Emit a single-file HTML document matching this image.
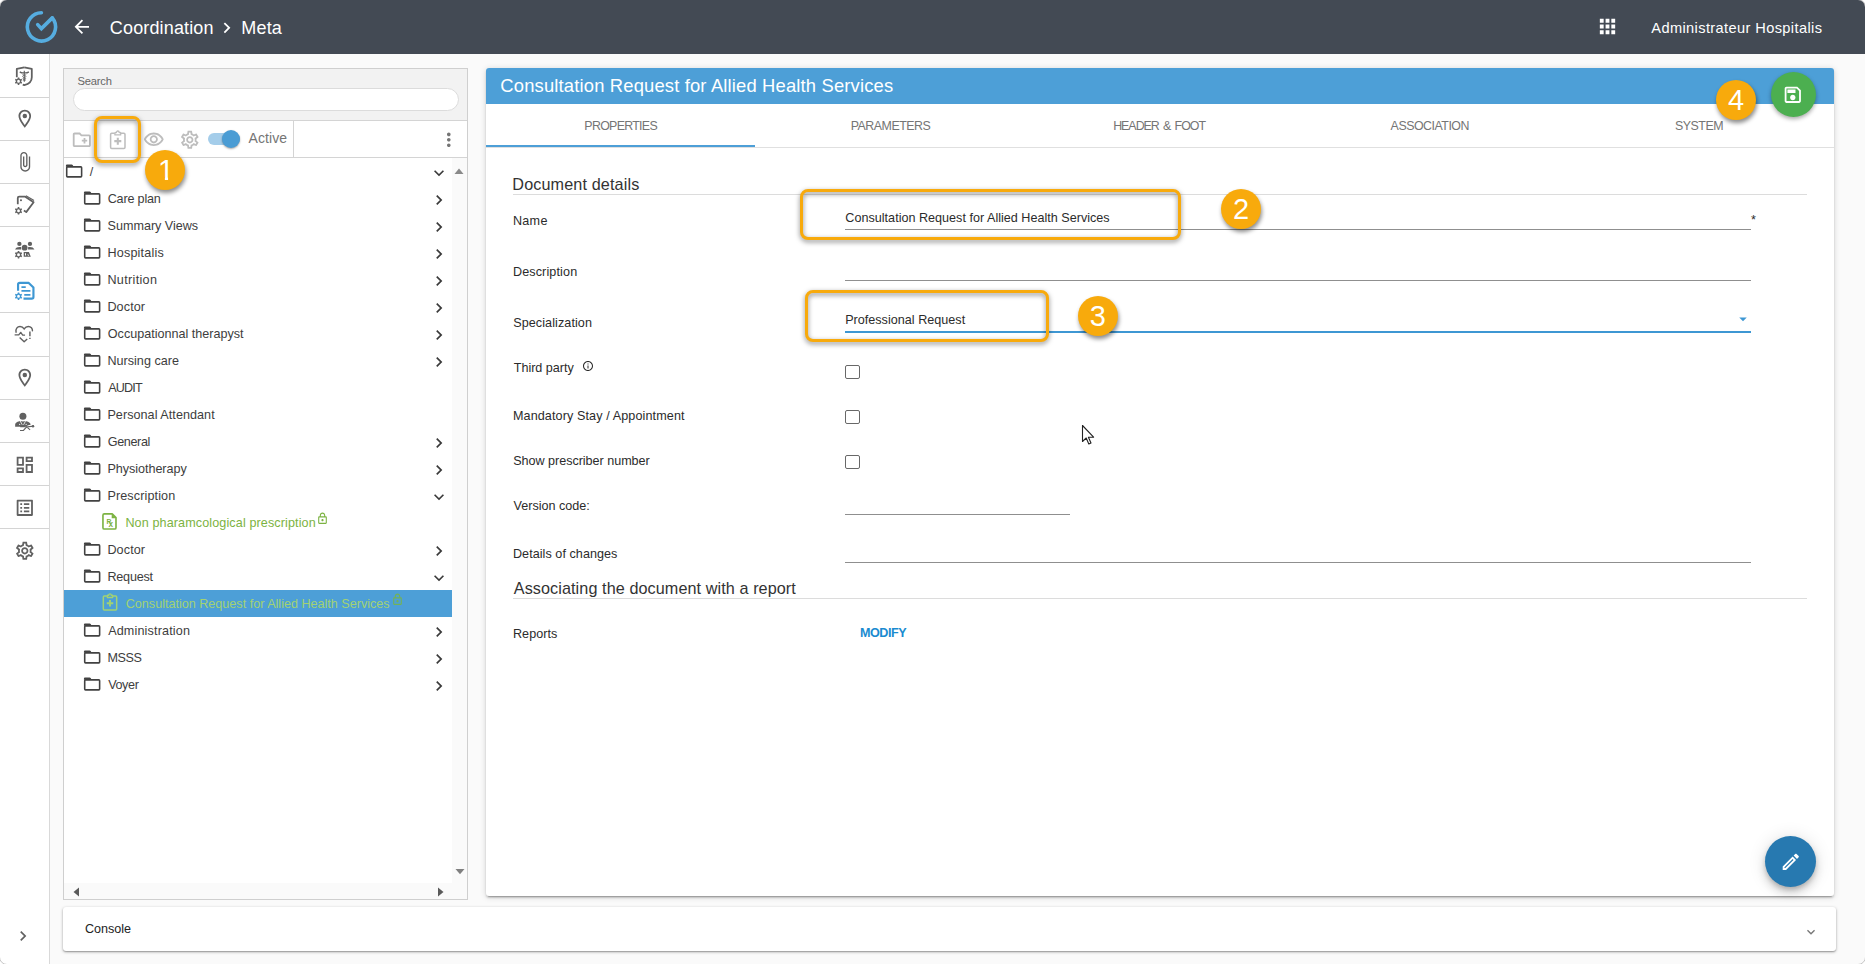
<!DOCTYPE html>
<html lang="en"><head><meta charset="utf-8"><title>Coordination &gt; Meta</title>
<style>
*{box-sizing:border-box;margin:0;padding:0}
html,body{width:1865px;height:964px;overflow:hidden;background:#fff}
body{font-family:"Liberation Sans",sans-serif;color:#222;position:relative}
#app{position:absolute;left:0;top:0;width:1865px;height:964px;background:#fafafa;border-radius:7px;overflow:hidden}
body::after{content:"";box-sizing:border-box;position:absolute;left:-1px;top:-1px;width:1867px;height:966px;border:1px solid rgba(0,0,0,.22);border-radius:8px;pointer-events:none}
.abs,.ic{position:absolute}
.ic{display:block;overflow:visible}
.t{position:absolute;white-space:nowrap;line-height:1}
#top{position:absolute;left:0;top:0;width:1865px;height:54px;background:#434a54}
#side{position:absolute;left:0;top:54px;width:50px;height:910px;background:#fff;border-right:1px solid #d9d9d9}
.sep{position:absolute;left:0;width:49px;height:1px;background:#d4d4d4}
#lp{position:absolute;left:63px;top:68px;width:405px;height:832px;border:1px solid #cfcfcf;background:#fff}
#srch{position:absolute;left:0;top:0;width:403px;height:51px;background:#f2f2f2}
#tb{position:absolute;left:0;top:51px;width:403px;height:38px;background:#fff;border-top:1px solid #d4d4d4;border-bottom:1px solid #d4d4d4}
#mp{position:absolute;left:486px;top:68px;width:1348px;height:828px;background:#fff;border-radius:3px;box-shadow:0 3px 1px -2px rgba(0,0,0,.2),0 2px 2px 0 rgba(0,0,0,.14),0 1px 6px 0 rgba(0,0,0,.16)}
#mph{position:absolute;left:0;top:0;width:1348px;height:36px;background:#4d9fd7;border-radius:3px 3px 0 0}
.lbl{font-size:12.6px;color:#2b2b2b}
.ul{position:absolute;height:1px;background:#8f8f8f}
.cb{position:absolute;width:15px;height:14px;border:1px solid #686868;border-radius:2px;background:#fff}
.hl{position:absolute;border:3px solid #f8aa0c;border-radius:8px;filter:drop-shadow(0 2px 2.5px rgba(0,0,0,.5))}
.num{position:absolute;width:40px;height:40px;border-radius:50%;background:#f8aa0c;color:#fff;font-size:29px;line-height:40px;text-align:center;box-shadow:1px 3px 4px rgba(0,0,0,.45)}
.one{display:inline-block;position:relative;left:1px;height:40px;clip-path:polygon(0 0,100% 0,100% 26.9px,10.15px 26.9px,10.15px 100%,6.95px 100%,6.95px 26.9px,0 26.9px)}
#con{position:absolute;left:63px;top:907px;width:1773px;height:44px;background:#fff;border-radius:3px;box-shadow:0 1px 3px rgba(0,0,0,.35),0 1px 1px rgba(0,0,0,.15)}
</style></head><body><div id="app">

<header>
<div id="top"></div>
<svg class="ic" style="left:24px;top:10px" width="34" height="34" viewBox="0 0 34 34" fill="none" stroke="#56ade0" stroke-width="3.6" stroke-linecap="round" stroke-linejoin="miter"><path d="M17.4 2.8 A14.1 14.1 0 1 0 28.3 7.9"/><path d="M13.7 14.6 L17.4 18.6 L28.3 7.9"/></svg>
<svg class="ic" style="left:71.2px;top:16.2px" width="21.6" height="21.6" viewBox="0 0 24 24" fill="#fff"><path d="M20 11H7.83l5.59-5.59L12 4l-8 8 8 8 1.41-1.41L7.83 13H20v-2z"/></svg>
<div class="t" id="t_coord" style="left:109.84px;top:19px;font-size:18px;color:#fff;font-weight:normal;letter-spacing:0.147px;">Coordination</div>
<svg class="ic" style="left:215.7px;top:16.85px" width="21.6" height="21.6" viewBox="0 0 24 24" fill="#fff"><path d="M10 6L8.59 7.41 13.17 12l-4.58 4.59L10 18l6-6z"/></svg>
<div class="t" id="t_meta" style="left:241.34px;top:19px;font-size:18px;color:#fff;font-weight:normal;letter-spacing:0.163px;">Meta</div>
<svg class="ic" style="left:1596.35px;top:15.2px" width="23" height="23" viewBox="0 0 24 24" fill="#fff"><path d="M4 8h4V4H4v4zm6 12h4v-4h-4v4zm-6 0h4v-4H4v4zm0-6h4v-4H4v4zm6 0h4v-4h-4v4zm6-10v4h4V4h-4zm-6 4h4V4h-4v4zm6 6h4v-4h-4v4zm0 6h4v-4h-4v4z"/></svg>
<div class="t" id="t_admin" style="left:1651.31px;top:21px;font-size:14.6px;color:#fff;font-weight:normal;letter-spacing:0.385px;">Administrateur Hospitalis</div>
</header>
<nav>
<div id="side">
<div class="sep" style="top:43px"></div>
<div class="sep" style="top:86px"></div>
<div class="sep" style="top:129px"></div>
<div class="sep" style="top:172px"></div>
<div class="sep" style="top:215px"></div>
<div class="sep" style="top:258px"></div>
<div class="sep" style="top:302px"></div>
<div class="sep" style="top:345px"></div>
<div class="sep" style="top:388px"></div>
<div class="sep" style="top:431px"></div>
<div class="sep" style="top:474px"></div>
</div>
<svg class="ic" style="left:13.4px;top:64.6px" width="22.5" height="22.5" viewBox="0 0 24 24" ><g fill="none" stroke="#616161" stroke-linejoin="round"><path d="M12.05 2.45 L20.05 4.2 V13 C20.05 17.6 16.4 20.4 12.05 21.5 L10.4 20.9" stroke-width="1.9"/><path d="M12.05 2.45 L4.05 4.2 V13.1" stroke-width="1.9"/><path d="M7.2 7.3 C9 8.5 10.6 8.7 12.05 8.2 C13.5 8.7 15.1 8.5 16.9 7.3" stroke-width="1.4"/><path d="M12.05 6 V17.8" stroke-width="1.2"/><path d="M10 10.3 C14.8 11.3 14.6 13 12.05 13.6 C9.8 14.2 10 15.6 13.6 16.3 M14.1 10.3 C9.3 11.3 9.5 13 12.05 13.6 C14.3 14.2 14.1 15.6 10.5 16.3" stroke-width="0.8"/></g><path fill="#616161" fill-rule="evenodd" d="M5.13 13.27 L6.67 13.27 L6.87 14.51 L7.83 15.07 L9 14.62 L9.77 15.95 L8.8 16.75 L8.8 17.85 L9.77 18.65 L9 19.98 L7.83 19.53 L6.87 20.09 L6.67 21.33 L5.13 21.33 L4.93 20.09 L3.97 19.53 L2.8 19.98 L2.03 18.65 L3 17.85 L3 16.75 L2.03 15.95 L2.8 14.62 L3.97 15.07 L4.93 14.51Z M4.42 17.3 a1.48 1.48 0 1 0 2.95 0 a1.48 1.48 0 1 0 -2.95 0Z"/></svg>
<svg class="ic" style="left:14px;top:107.75px" width="21.6" height="21.6" viewBox="0 0 24 24" fill="#616161"><path d="M12 2C8.13 2 5 5.13 5 9c0 5.25 7 13 7 13s7-7.75 7-13c0-3.87-3.13-7-7-7zM7 9c0-2.76 2.24-5 5-5s5 2.24 5 5c0 2.88-2.88 7.19-5 9.88C9.92 16.21 7 11.85 7 9z"/><circle cx="12" cy="9" r="2.5"/></svg>
<svg class="ic" style="left:13.9px;top:150.95px" width="21.6" height="21.6" viewBox="0 0 24 24" fill="#616161"><path d="M16.5 6v11.5c0 2.21-1.79 4-4 4s-4-1.79-4-4V5c0-1.38 1.12-2.5 2.5-2.5s2.5 1.12 2.5 2.5v10.5c0 .55-.45 1-1 1s-1-.45-1-1V6H10v9.5c0 1.38 1.12 2.5 2.5 2.5s2.5-1.12 2.5-2.5V5c0-2.21-1.79-4-4-4S7 2.79 7 5v12.5c0 3.04 2.46 5.5 5.5 5.5s5.5-2.46 5.5-5.5V6h-1.5z"/></svg>
<svg class="ic" style="left:13.4px;top:194.35px" width="22.5" height="22.5" viewBox="0 0 24 24" ><g fill="none" stroke="#616161" stroke-linejoin="round"><path d="M5.1 10.8 V4.2 Q5.1 2.7 6.6 2.7 H12.6 L22 8.8 L14.1 19.3 L11.6 17.7" stroke-width="1.9"/><path d="M13.8 1.9 L22.4 7" stroke-width="1.3"/></g><circle cx="8.5" cy="6.6" r="1.1" fill="#616161"/><path fill="#616161" fill-rule="evenodd" d="M5.13 13.87 L6.67 13.87 L6.87 15.11 L7.83 15.67 L9 15.22 L9.77 16.55 L8.8 17.35 L8.8 18.45 L9.77 19.25 L9 20.58 L7.83 20.13 L6.87 20.69 L6.67 21.93 L5.13 21.93 L4.93 20.69 L3.97 20.13 L2.8 20.58 L2.03 19.25 L3 18.45 L3 17.35 L2.03 16.55 L2.8 15.22 L3.97 15.67 L4.93 15.11Z M4.42 17.9 a1.48 1.48 0 1 0 2.95 0 a1.48 1.48 0 1 0 -2.95 0Z"/></svg>
<svg class="ic" style="left:13.4px;top:238.55px" width="22.5" height="22.5" viewBox="0 0 24 24" ><g fill="#616161"><circle cx="6.8" cy="5.2" r="2.3"/><circle cx="18.1" cy="5.2" r="2.3"/><circle cx="12.4" cy="9.2" r="3.1"/><path d="M2.2 11.3 C3 8.8 5.6 8.2 8.6 8.6 L8.8 11.3Z"/><path d="M22.8 11.3 C22 8.8 19.4 8.2 16.2 8.6 L16 11.3Z"/><path d="M11.4 13.8 H17 L19 19 H11.4Z M12.8 15.2 V17.7 H13.9 V15.2Z M15 16.4 L16.2 17.8 H17.2 L16.4 16.4Z" fill-rule="evenodd"/></g><path fill="#616161" fill-rule="evenodd" d="M5.13 12.67 L6.67 12.67 L6.87 13.91 L7.83 14.47 L9 14.02 L9.77 15.35 L8.8 16.15 L8.8 17.25 L9.77 18.05 L9 19.38 L7.83 18.93 L6.87 19.49 L6.67 20.73 L5.13 20.73 L4.93 19.49 L3.97 18.93 L2.8 19.38 L2.03 18.05 L3 17.25 L3 16.15 L2.03 15.35 L2.8 14.02 L3.97 14.47 L4.93 13.91Z M4.42 16.7 a1.48 1.48 0 1 0 2.95 0 a1.48 1.48 0 1 0 -2.95 0Z"/></svg>
<svg class="ic" style="left:13.4px;top:279.95000000000005px" width="22.5" height="22.5" viewBox="0 0 24 24" ><path d="M5.4 11.4 V4.8 Q5.4 3.1 7.1 3.1 H16.8 L21.8 8 V18.2 Q21.8 19.9 20.1 19.9 H11.2" fill="none" stroke="#3e97d3" stroke-width="2.3" stroke-linejoin="round"/><path d="M9 7.5 H13.6 M9 11.6 H18.6 M12 15.8 H18.6" stroke="#3e97d3" stroke-width="1.9" fill="none"/><path fill="#3e97d3" fill-rule="evenodd" d="M5.13 13.27 L6.67 13.27 L6.87 14.51 L7.83 15.07 L9 14.62 L9.77 15.95 L8.8 16.75 L8.8 17.85 L9.77 18.65 L9 19.98 L7.83 19.53 L6.87 20.09 L6.67 21.33 L5.13 21.33 L4.93 20.09 L3.97 19.53 L2.8 19.98 L2.03 18.65 L3 17.85 L3 16.75 L2.03 15.95 L2.8 14.62 L3.97 15.07 L4.93 14.51Z M4.42 17.3 a1.48 1.48 0 1 0 2.95 0 a1.48 1.48 0 1 0 -2.95 0Z"/></svg>
<svg class="ic" style="left:13.4px;top:323.3500000000001px" width="21.6" height="21.6" viewBox="0 0 24 24" ><path d="M3.4 10.2 C2.6 6.6 4.8 3.8 7.8 3.8 C9.8 3.8 11.4 5 12.4 6.6 C13.4 5 15 3.8 17 3.8 C20 3.8 21.8 6 21.6 8.6" fill="none" stroke="#616161" stroke-width="1.6" stroke-linecap="round"/><path d="M1.8 13.2 H6.4 L8.6 10.4 L10.8 13.4 H13.4" fill="none" stroke="#616161" stroke-width="1.5" stroke-linejoin="round"/><path d="M7.4 16 L12.4 20.8 L15.8 17.8" fill="none" stroke="#616161" stroke-width="1.6" stroke-linejoin="round"/><path d="M18.8 9.4 V14.8 M18.8 16.4 V17.8" stroke="#616161" stroke-width="1.6"/></svg>
<svg class="ic" style="left:14px;top:366.95px" width="21.6" height="21.6" viewBox="0 0 24 24" fill="#616161"><path d="M12 2C8.13 2 5 5.13 5 9c0 5.25 7 13 7 13s7-7.75 7-13c0-3.87-3.13-7-7-7zM7 9c0-2.76 2.24-5 5-5s5 2.24 5 5c0 2.88-2.88 7.19-5 9.88C9.92 16.21 7 11.85 7 9z"/><circle cx="12" cy="9" r="2.5"/></svg>
<svg class="ic" style="left:13.2px;top:410.95000000000005px" width="21.6" height="21.6" viewBox="0 0 24 24" ><g fill="#616161"><circle cx="11" cy="5.8" r="3.9"/><path d="M2.4 17.4 V15.4 C2.4 12.8 5.4 11.6 8.2 11.2 L11 11.6 L13.8 11.2 C16.4 11.6 19.6 12.8 19.6 15.4 L17 15.8 L13 18 H8 V17.4Z"/></g><path d="M8 11 L10.3 15.4 M14 11 L11.7 15.4" stroke="#fff" stroke-width=".9" fill="none"/><circle cx="7.4" cy="14.8" r=".7" fill="#fff"/><circle cx="14.6" cy="14.8" r=".7" fill="#fff"/><path d="M7.8 21.6 H11.6 L15.2 17.6 L19 21 M14 17.8 L23.4 16.8" stroke="#616161" stroke-width="1.2" fill="none"/><circle cx="22.2" cy="17" r="1.4" fill="#616161"/></svg>
<svg class="ic" style="left:14px;top:454.25px" width="21.6" height="21.6" viewBox="0 0 24 24" fill="#616161"><path d="M19 5v2h-4V5h4M9 5v6H5V5h4m10 8v6h-4v-6h4M9 17v2H5v-2h4M21 3h-8v6h8V3zM11 3H3v10h8V3zm10 8h-8v10h8V11zm-10 4H3v6h8v-6z"/></svg>
<svg class="ic" style="left:14px;top:497.05px" width="21.6" height="21.6" viewBox="0 0 24 24" fill="#616161"><path d="M11 7h6v2h-6zm0 4h6v2h-6zm0 4h6v2h-6zM7 7h2v2H7zm0 4h2v2H7zm0 4h2v2H7zM20.1 3H3.9c-.5 0-.9.4-.9.9v16.2c0 .4.4.9.9.9h16.2c.4 0 .9-.5.9-.9V3.9c0-.5-.5-.9-.9-.9zM19 19H5V5h14v14z"/></svg>
<svg class="ic" style="left:14px;top:539.7500000000001px" width="21.6" height="21.6" viewBox="0 0 24 24" fill="#616161"><path d="M19.43 12.98c.04-.32.07-.64.07-.98 0-.34-.03-.66-.07-.98l2.11-1.65c.19-.15.24-.42.12-.64l-2-3.46c-.09-.16-.26-.25-.44-.25-.06 0-.12.01-.17.03l-2.49 1c-.52-.4-1.08-.73-1.69-.98l-.38-2.65C14.46 2.18 14.25 2 14 2h-4c-.25 0-.46.18-.49.42l-.38 2.65c-.61.25-1.17.59-1.69.98l-2.49-1c-.06-.02-.12-.03-.18-.03-.17 0-.34.09-.43.25l-2 3.46c-.13.22-.07.49.12.64l2.11 1.65c-.04.32-.07.65-.07.98 0 .33.03.66.07.98l-2.11 1.65c-.19.15-.24.42-.12.64l2 3.46c.09.16.26.25.44.25.06 0 .12-.01.17-.03l2.49-1c.52.4 1.08.73 1.69.98l.38 2.65c.03.24.24.42.49.42h4c.25 0 .46-.18.49-.42l.38-2.65c.61-.25 1.17-.59 1.69-.98l2.49 1c.06.02.12.03.18.03.17 0 .34-.09.43-.25l2-3.46c.12-.22.07-.49-.12-.64l-2.11-1.65zm-1.98-1.71c.04.31.05.52.05.73 0 .21-.02.43-.05.73l-.14 1.13.89.7 1.08.84-.7 1.21-1.27-.51-1.04-.42-.9.68c-.43.32-.84.56-1.25.73l-1.06.43-.16 1.13-.2 1.35h-1.4l-.19-1.35-.16-1.13-1.06-.43c-.43-.18-.83-.41-1.23-.71l-.91-.7-1.06.43-1.27.51-.7-1.21 1.08-.84.89-.7-.14-1.13c-.03-.31-.05-.54-.05-.74s.02-.43.05-.73l.14-1.13-.89-.7-1.08-.84.7-1.21 1.27.51 1.04.42.9-.68c.43-.32.84-.56 1.25-.73l1.06-.43.16-1.13.2-1.35h1.39l.19 1.35.16 1.13 1.06.43c.43.18.83.41 1.23.71l.91.7 1.06-.43 1.27-.51.7 1.21-1.07.85-.89.7.14 1.13zM12 8c-2.21 0-4 1.79-4 4s1.79 4 4 4 4-1.79 4-4-1.79-4-4-4zm0 6c-1.1 0-2-.9-2-2s.9-2 2-2 2 .9 2 2-.9 2-2 2z"/></svg>
<svg class="ic" style="left:13.05px;top:926.1px" width="20" height="20" viewBox="0 0 24 24" fill="#616161"><path d="M10 6L8.59 7.41 13.17 12l-4.58 4.59L10 18l6-6z"/></svg>
</nav>
<aside>
<div id="lp">
<div id="srch"><div class="abs" style="left:9px;top:19px;width:386px;height:23px;border:1px solid #dcdcdc;border-radius:12px;background:#fff"></div></div>
<div id="tb"><div class="abs" style="left:229px;top:0;width:1px;height:36px;background:#d4d4d4"></div></div>
<div class="abs" style="left:388px;top:89px;width:15px;height:725px;background:#fafafa"></div>
<div class="abs" style="left:0;top:814px;width:403px;height:16px;background:#fafafa"></div>
</div>
<div class="t" id="t_search" style="left:77.57px;top:76px;font-size:11.2px;color:#666;font-weight:normal;letter-spacing:-0.215px;">Search</div>
<svg class="ic" style="left:71.1px;top:128.6px" width="21.6" height="21.6" viewBox="0 0 24 24" fill="#bdbdbd"><path d="M20 6h-8l-2-2H4c-1.11 0-1.99.89-1.99 2L2 18c0 1.11.89 2 2 2h16c1.11 0 2-.89 2-2V8c0-1.11-.89-2-2-2zm0 12H4V6h5.17l2 2H20v10zm-8-4h2v2h2v-2h2v-2h-2v-2h-2v2h-2z"/></svg>
<svg class="ic" style="left:107px;top:129px" width="21.6" height="21.6" viewBox="0 0 24 24" ><path d="M8.6 4.8 H5.2 Q4 4.8 4 6 V20.4 Q4 21.6 5.2 21.6 H18.8 Q20 21.6 20 20.4 V6 Q20 4.8 18.8 4.8 H15.4" fill="none" stroke="#bdbdbd" stroke-width="1.7" stroke-linejoin="round"/><path d="M8.8 6.6 V4.6 Q8.8 3.9 9.5 3.9 H10.5 C10.5 1.7 13.5 1.7 13.5 3.9 H14.5 Q15.2 3.9 15.2 4.6 V6.6Z" fill="none" stroke="#bdbdbd" stroke-width="1.4449999999999998" stroke-linejoin="round"/><path d="M12 9.6 V17.4 M8.1 13.5 H15.9" stroke="#bdbdbd" stroke-width="2.3"/></svg>
<svg class="ic" style="left:143.1px;top:128.6px" width="21.6" height="21.6" viewBox="0 0 24 24" fill="#bdbdbd"><path d="M12 6c3.79 0 7.17 2.13 8.82 5.5C19.17 14.87 15.79 17 12 17s-7.17-2.13-8.82-5.5C4.83 8.13 8.21 6 12 6m0-2C7 4 2.73 7.11 1 11.5 2.73 15.89 7 19 12 19s9.27-3.11 11-7.5C21.27 7.11 17 4 12 4zm0 5c1.38 0 2.5 1.12 2.5 2.5S13.38 14 12 14s-2.5-1.12-2.5-2.5S10.62 9 12 9m0-2c-2.48 0-4.5 2.02-4.5 4.5S9.52 16 12 16s4.5-2.02 4.5-4.5S14.48 7 12 7z"/></svg>
<svg class="ic" style="left:178.9px;top:129px" width="21.6" height="21.6" viewBox="0 0 24 24" fill="#bdbdbd"><path d="M19.43 12.98c.04-.32.07-.64.07-.98 0-.34-.03-.66-.07-.98l2.11-1.65c.19-.15.24-.42.12-.64l-2-3.46c-.09-.16-.26-.25-.44-.25-.06 0-.12.01-.17.03l-2.49 1c-.52-.4-1.08-.73-1.69-.98l-.38-2.65C14.46 2.18 14.25 2 14 2h-4c-.25 0-.46.18-.49.42l-.38 2.65c-.61.25-1.17.59-1.69.98l-2.49-1c-.06-.02-.12-.03-.18-.03-.17 0-.34.09-.43.25l-2 3.46c-.13.22-.07.49.12.64l2.11 1.65c-.04.32-.07.65-.07.98 0 .33.03.66.07.98l-2.11 1.65c-.19.15-.24.42-.12.64l2 3.46c.09.16.26.25.44.25.06 0 .12-.01.17-.03l2.49-1c.52.4 1.08.73 1.69.98l.38 2.65c.03.24.24.42.49.42h4c.25 0 .46-.18.49-.42l.38-2.65c.61-.25 1.17-.59 1.69-.98l2.49 1c.06.02.12.03.18.03.17 0 .34-.09.43-.25l2-3.46c.12-.22.07-.49-.12-.64l-2.11-1.65zm-1.98-1.71c.04.31.05.52.05.73 0 .21-.02.43-.05.73l-.14 1.13.89.7 1.08.84-.7 1.21-1.27-.51-1.04-.42-.9.68c-.43.32-.84.56-1.25.73l-1.06.43-.16 1.13-.2 1.35h-1.4l-.19-1.35-.16-1.13-1.06-.43c-.43-.18-.83-.41-1.23-.71l-.91-.7-1.06.43-1.27.51-.7-1.21 1.08-.84.89-.7-.14-1.13c-.03-.31-.05-.54-.05-.74s.02-.43.05-.73l.14-1.13-.89-.7-1.08-.84.7-1.21 1.27.51 1.04.42.9-.68c.43-.32.84-.56 1.25-.73l1.06-.43.16-1.13.2-1.35h1.39l.19 1.35.16 1.13 1.06.43c.43.18.83.41 1.23.71l.91.7 1.06-.43 1.27-.51.7 1.21-1.07.85-.89.7.14 1.13zM12 8c-2.21 0-4 1.79-4 4s1.79 4 4 4 4-1.79 4-4-1.79-4-4-4zm0 6c-1.1 0-2-.9-2-2s.9-2 2-2 2 .9 2 2-.9 2-2 2z"/></svg>
<div class="abs" style="left:208px;top:133px;width:32px;height:12px;border-radius:6px;background:#a4cdea"></div>
<div class="abs" style="left:222.4px;top:130px;width:18px;height:18px;border-radius:50%;background:#4a9cd4;box-shadow:0 1px 2px rgba(0,0,0,.35)"></div>
<div class="t" id="t_active" style="left:248.57px;top:131px;font-size:14px;color:#757575;font-weight:normal;letter-spacing:0.064px;">Active</div>
<svg class="ic" style="left:438px;top:129.1px" width="21.6" height="21.6" viewBox="0 0 24 24" fill="#757575"><path d="M12 8c1.1 0 2-.9 2-2s-.9-2-2-2-2 .9-2 2 .9 2 2 2zm0 2c-1.1 0-2 .9-2 2s.9 2 2 2 2-.9 2-2-.9-2-2-2zm0 6c-1.1 0-2 .9-2 2s.9 2 2 2 2-.9 2-2-.9-2-2-2z"/></svg>
<svg class="ic" style="left:63.8px;top:160.7px" width="20" height="20" viewBox="0 0 24 24" ><path d="M3.25 8 Q3.25 7.05 4.2 7.05 H20.2 Q21.15 7.05 21.15 8 V18.1 Q21.15 19.05 20.2 19.05 H4.2 Q3.25 19.05 3.25 18.1Z" fill="none" stroke="#424242" stroke-width="1.9"/><path d="M2.3 8 V5.3 Q2.3 4.1 3.5 4.1 H9.2 Q10 4.1 10.4 4.8 L11.6 7 H2.3Z" fill="#424242"/></svg>
<div class="t" id="tr0" style="left:89.8px;top:166px;font-size:12.6px;color:#3d3d3d;font-weight:normal;letter-spacing:0px;">/</div>
<svg class="ic" style="left:428.8px;top:162.85px" width="20" height="20" viewBox="0 0 24 24" fill="#3a3a3a"><path d="M16.59 8.59L12 13.17 7.41 8.59 6 10l6 6 6-6z"/></svg>
<svg class="ic" style="left:81.8px;top:187.7px" width="20" height="20" viewBox="0 0 24 24" ><path d="M3.25 8 Q3.25 7.05 4.2 7.05 H20.2 Q21.15 7.05 21.15 8 V18.1 Q21.15 19.05 20.2 19.05 H4.2 Q3.25 19.05 3.25 18.1Z" fill="none" stroke="#424242" stroke-width="1.9"/><path d="M2.3 8 V5.3 Q2.3 4.1 3.5 4.1 H9.2 Q10 4.1 10.4 4.8 L11.6 7 H2.3Z" fill="#424242"/></svg>
<div class="t" id="tr1" style="left:107.72px;top:193px;font-size:12.6px;color:#3d3d3d;font-weight:normal;letter-spacing:-0.189px;">Care plan</div>
<svg class="ic" style="left:428.7px;top:189.9px" width="20" height="20" viewBox="0 0 24 24" fill="#3a3a3a"><path d="M10 6L8.59 7.41 13.17 12l-4.58 4.59L10 18l6-6z"/></svg>
<svg class="ic" style="left:81.8px;top:214.7px" width="20" height="20" viewBox="0 0 24 24" ><path d="M3.25 8 Q3.25 7.05 4.2 7.05 H20.2 Q21.15 7.05 21.15 8 V18.1 Q21.15 19.05 20.2 19.05 H4.2 Q3.25 19.05 3.25 18.1Z" fill="none" stroke="#424242" stroke-width="1.9"/><path d="M2.3 8 V5.3 Q2.3 4.1 3.5 4.1 H9.2 Q10 4.1 10.4 4.8 L11.6 7 H2.3Z" fill="#424242"/></svg>
<div class="t" id="tr2" style="left:107.62px;top:220px;font-size:12.6px;color:#3d3d3d;font-weight:normal;letter-spacing:-0.016px;">Summary Views</div>
<svg class="ic" style="left:428.7px;top:216.9px" width="20" height="20" viewBox="0 0 24 24" fill="#3a3a3a"><path d="M10 6L8.59 7.41 13.17 12l-4.58 4.59L10 18l6-6z"/></svg>
<svg class="ic" style="left:81.8px;top:241.7px" width="20" height="20" viewBox="0 0 24 24" ><path d="M3.25 8 Q3.25 7.05 4.2 7.05 H20.2 Q21.15 7.05 21.15 8 V18.1 Q21.15 19.05 20.2 19.05 H4.2 Q3.25 19.05 3.25 18.1Z" fill="none" stroke="#424242" stroke-width="1.9"/><path d="M2.3 8 V5.3 Q2.3 4.1 3.5 4.1 H9.2 Q10 4.1 10.4 4.8 L11.6 7 H2.3Z" fill="#424242"/></svg>
<div class="t" id="tr3" style="left:107.4px;top:247px;font-size:12.6px;color:#3d3d3d;font-weight:normal;letter-spacing:0.197px;">Hospitalis</div>
<svg class="ic" style="left:428.7px;top:243.9px" width="20" height="20" viewBox="0 0 24 24" fill="#3a3a3a"><path d="M10 6L8.59 7.41 13.17 12l-4.58 4.59L10 18l6-6z"/></svg>
<svg class="ic" style="left:81.8px;top:268.7px" width="20" height="20" viewBox="0 0 24 24" ><path d="M3.25 8 Q3.25 7.05 4.2 7.05 H20.2 Q21.15 7.05 21.15 8 V18.1 Q21.15 19.05 20.2 19.05 H4.2 Q3.25 19.05 3.25 18.1Z" fill="none" stroke="#424242" stroke-width="1.9"/><path d="M2.3 8 V5.3 Q2.3 4.1 3.5 4.1 H9.2 Q10 4.1 10.4 4.8 L11.6 7 H2.3Z" fill="#424242"/></svg>
<div class="t" id="tr4" style="left:107.45px;top:274px;font-size:12.6px;color:#3d3d3d;font-weight:normal;letter-spacing:0.32px;">Nutrition</div>
<svg class="ic" style="left:428.7px;top:270.9px" width="20" height="20" viewBox="0 0 24 24" fill="#3a3a3a"><path d="M10 6L8.59 7.41 13.17 12l-4.58 4.59L10 18l6-6z"/></svg>
<svg class="ic" style="left:81.8px;top:295.7px" width="20" height="20" viewBox="0 0 24 24" ><path d="M3.25 8 Q3.25 7.05 4.2 7.05 H20.2 Q21.15 7.05 21.15 8 V18.1 Q21.15 19.05 20.2 19.05 H4.2 Q3.25 19.05 3.25 18.1Z" fill="none" stroke="#424242" stroke-width="1.9"/><path d="M2.3 8 V5.3 Q2.3 4.1 3.5 4.1 H9.2 Q10 4.1 10.4 4.8 L11.6 7 H2.3Z" fill="#424242"/></svg>
<div class="t" id="tr5" style="left:107.4px;top:301px;font-size:12.6px;color:#3d3d3d;font-weight:normal;letter-spacing:0.115px;">Doctor</div>
<svg class="ic" style="left:428.7px;top:297.9px" width="20" height="20" viewBox="0 0 24 24" fill="#3a3a3a"><path d="M10 6L8.59 7.41 13.17 12l-4.58 4.59L10 18l6-6z"/></svg>
<svg class="ic" style="left:81.8px;top:322.7px" width="20" height="20" viewBox="0 0 24 24" ><path d="M3.25 8 Q3.25 7.05 4.2 7.05 H20.2 Q21.15 7.05 21.15 8 V18.1 Q21.15 19.05 20.2 19.05 H4.2 Q3.25 19.05 3.25 18.1Z" fill="none" stroke="#424242" stroke-width="1.9"/><path d="M2.3 8 V5.3 Q2.3 4.1 3.5 4.1 H9.2 Q10 4.1 10.4 4.8 L11.6 7 H2.3Z" fill="#424242"/></svg>
<div class="t" id="tr6" style="left:107.84px;top:328px;font-size:12.6px;color:#3d3d3d;font-weight:normal;letter-spacing:-0.004px;">Occupationnal therapyst</div>
<svg class="ic" style="left:428.7px;top:324.9px" width="20" height="20" viewBox="0 0 24 24" fill="#3a3a3a"><path d="M10 6L8.59 7.41 13.17 12l-4.58 4.59L10 18l6-6z"/></svg>
<svg class="ic" style="left:81.8px;top:349.7px" width="20" height="20" viewBox="0 0 24 24" ><path d="M3.25 8 Q3.25 7.05 4.2 7.05 H20.2 Q21.15 7.05 21.15 8 V18.1 Q21.15 19.05 20.2 19.05 H4.2 Q3.25 19.05 3.25 18.1Z" fill="none" stroke="#424242" stroke-width="1.9"/><path d="M2.3 8 V5.3 Q2.3 4.1 3.5 4.1 H9.2 Q10 4.1 10.4 4.8 L11.6 7 H2.3Z" fill="#424242"/></svg>
<div class="t" id="tr7" style="left:107.4px;top:355px;font-size:12.6px;color:#3d3d3d;font-weight:normal;letter-spacing:0.017px;">Nursing care</div>
<svg class="ic" style="left:428.7px;top:351.9px" width="20" height="20" viewBox="0 0 24 24" fill="#3a3a3a"><path d="M10 6L8.59 7.41 13.17 12l-4.58 4.59L10 18l6-6z"/></svg>
<svg class="ic" style="left:81.8px;top:376.7px" width="20" height="20" viewBox="0 0 24 24" ><path d="M3.25 8 Q3.25 7.05 4.2 7.05 H20.2 Q21.15 7.05 21.15 8 V18.1 Q21.15 19.05 20.2 19.05 H4.2 Q3.25 19.05 3.25 18.1Z" fill="none" stroke="#424242" stroke-width="1.9"/><path d="M2.3 8 V5.3 Q2.3 4.1 3.5 4.1 H9.2 Q10 4.1 10.4 4.8 L11.6 7 H2.3Z" fill="#424242"/></svg>
<div class="t" id="tr8" style="left:108.15px;top:382px;font-size:12.6px;color:#3d3d3d;font-weight:normal;letter-spacing:-0.815px;">AUDIT</div>
<svg class="ic" style="left:81.8px;top:403.7px" width="20" height="20" viewBox="0 0 24 24" ><path d="M3.25 8 Q3.25 7.05 4.2 7.05 H20.2 Q21.15 7.05 21.15 8 V18.1 Q21.15 19.05 20.2 19.05 H4.2 Q3.25 19.05 3.25 18.1Z" fill="none" stroke="#424242" stroke-width="1.9"/><path d="M2.3 8 V5.3 Q2.3 4.1 3.5 4.1 H9.2 Q10 4.1 10.4 4.8 L11.6 7 H2.3Z" fill="#424242"/></svg>
<div class="t" id="tr9" style="left:107.4px;top:409px;font-size:12.6px;color:#3d3d3d;font-weight:normal;letter-spacing:0.05px;">Personal Attendant</div>
<svg class="ic" style="left:81.8px;top:430.7px" width="20" height="20" viewBox="0 0 24 24" ><path d="M3.25 8 Q3.25 7.05 4.2 7.05 H20.2 Q21.15 7.05 21.15 8 V18.1 Q21.15 19.05 20.2 19.05 H4.2 Q3.25 19.05 3.25 18.1Z" fill="none" stroke="#424242" stroke-width="1.9"/><path d="M2.3 8 V5.3 Q2.3 4.1 3.5 4.1 H9.2 Q10 4.1 10.4 4.8 L11.6 7 H2.3Z" fill="#424242"/></svg>
<div class="t" id="tr10" style="left:107.72px;top:436px;font-size:12.6px;color:#3d3d3d;font-weight:normal;letter-spacing:-0.362px;">General</div>
<svg class="ic" style="left:428.7px;top:432.9px" width="20" height="20" viewBox="0 0 24 24" fill="#3a3a3a"><path d="M10 6L8.59 7.41 13.17 12l-4.58 4.59L10 18l6-6z"/></svg>
<svg class="ic" style="left:81.8px;top:457.7px" width="20" height="20" viewBox="0 0 24 24" ><path d="M3.25 8 Q3.25 7.05 4.2 7.05 H20.2 Q21.15 7.05 21.15 8 V18.1 Q21.15 19.05 20.2 19.05 H4.2 Q3.25 19.05 3.25 18.1Z" fill="none" stroke="#424242" stroke-width="1.9"/><path d="M2.3 8 V5.3 Q2.3 4.1 3.5 4.1 H9.2 Q10 4.1 10.4 4.8 L11.6 7 H2.3Z" fill="#424242"/></svg>
<div class="t" id="tr11" style="left:107.4px;top:463px;font-size:12.6px;color:#3d3d3d;font-weight:normal;letter-spacing:-0.039px;">Physiotherapy</div>
<svg class="ic" style="left:428.7px;top:459.9px" width="20" height="20" viewBox="0 0 24 24" fill="#3a3a3a"><path d="M10 6L8.59 7.41 13.17 12l-4.58 4.59L10 18l6-6z"/></svg>
<svg class="ic" style="left:81.8px;top:484.7px" width="20" height="20" viewBox="0 0 24 24" ><path d="M3.25 8 Q3.25 7.05 4.2 7.05 H20.2 Q21.15 7.05 21.15 8 V18.1 Q21.15 19.05 20.2 19.05 H4.2 Q3.25 19.05 3.25 18.1Z" fill="none" stroke="#424242" stroke-width="1.9"/><path d="M2.3 8 V5.3 Q2.3 4.1 3.5 4.1 H9.2 Q10 4.1 10.4 4.8 L11.6 7 H2.3Z" fill="#424242"/></svg>
<div class="t" id="tr12" style="left:107.4px;top:490px;font-size:12.6px;color:#3d3d3d;font-weight:normal;letter-spacing:0.122px;">Prescription</div>
<svg class="ic" style="left:428.8px;top:486.85px" width="20" height="20" viewBox="0 0 24 24" fill="#3a3a3a"><path d="M16.59 8.59L12 13.17 7.41 8.59 6 10l6 6 6-6z"/></svg>
<svg class="ic" style="left:98.8px;top:510.9px" width="20.6" height="20.6" viewBox="0 0 24 24" ><path d="M4.6 5 Q4.6 3.4 6.2 3.4 H15.4 L19.8 7.8 V19.4 Q19.8 21 18.2 21 H6.2 Q4.6 21 4.6 19.4Z" fill="none" stroke="#7cb342" stroke-width="1.9" stroke-linejoin="round"/><path d="M14.8 3.6 V8.4 H19.6Z" fill="#7cb342"/><text x="8.7" y="14.9" font-family="Liberation Sans, sans-serif" font-weight="bold" font-size="8" fill="#7cb342">R</text><text x="11" y="18.6" font-family="Liberation Sans, sans-serif" font-weight="bold" font-size="9.5" fill="#7cb342">x</text></svg>
<div class="t" id="tr13" style="left:125.41px;top:517px;font-size:12.6px;color:#7cb342;font-weight:normal;letter-spacing:0.109px;">Non pharamcological prescription</div>
<svg class="ic" style="left:315.9px;top:511.8px" width="13" height="13" viewBox="0 0 24 24" fill="#7cb342"><path d="M18 8h-1V6c0-2.76-2.24-5-5-5S7 3.24 7 6v2H6c-1.1 0-2 .9-2 2v10c0 1.1.9 2 2 2h12c1.1 0 2-.9 2-2V10c0-1.1-.9-2-2-2zM9 6c0-1.66 1.34-3 3-3s3 1.34 3 3v2H9V6zm9 14H6V10h12v10zm-6-3c1.1 0 2-.9 2-2s-.9-2-2-2-2 .9-2 2 .9 2 2 2z"/></svg>
<svg class="ic" style="left:81.8px;top:538.7px" width="20" height="20" viewBox="0 0 24 24" ><path d="M3.25 8 Q3.25 7.05 4.2 7.05 H20.2 Q21.15 7.05 21.15 8 V18.1 Q21.15 19.05 20.2 19.05 H4.2 Q3.25 19.05 3.25 18.1Z" fill="none" stroke="#424242" stroke-width="1.9"/><path d="M2.3 8 V5.3 Q2.3 4.1 3.5 4.1 H9.2 Q10 4.1 10.4 4.8 L11.6 7 H2.3Z" fill="#424242"/></svg>
<div class="t" id="tr14" style="left:107.4px;top:544px;font-size:12.6px;color:#3d3d3d;font-weight:normal;letter-spacing:0.115px;">Doctor</div>
<svg class="ic" style="left:428.7px;top:540.9px" width="20" height="20" viewBox="0 0 24 24" fill="#3a3a3a"><path d="M10 6L8.59 7.41 13.17 12l-4.58 4.59L10 18l6-6z"/></svg>
<svg class="ic" style="left:81.8px;top:565.7px" width="20" height="20" viewBox="0 0 24 24" ><path d="M3.25 8 Q3.25 7.05 4.2 7.05 H20.2 Q21.15 7.05 21.15 8 V18.1 Q21.15 19.05 20.2 19.05 H4.2 Q3.25 19.05 3.25 18.1Z" fill="none" stroke="#424242" stroke-width="1.9"/><path d="M2.3 8 V5.3 Q2.3 4.1 3.5 4.1 H9.2 Q10 4.1 10.4 4.8 L11.6 7 H2.3Z" fill="#424242"/></svg>
<div class="t" id="tr15" style="left:107.4px;top:571px;font-size:12.6px;color:#3d3d3d;font-weight:normal;letter-spacing:-0.203px;">Request</div>
<svg class="ic" style="left:428.8px;top:567.85px" width="20" height="20" viewBox="0 0 24 24" fill="#3a3a3a"><path d="M16.59 8.59L12 13.17 7.41 8.59 6 10l6 6 6-6z"/></svg>
<div class="abs" style="left:64px;top:589.6px;width:388px;height:27px;background:#4d9fd7"></div>
<svg class="ic" style="left:100px;top:592.4px" width="20" height="20" viewBox="0 0 24 24" ><path d="M8.6 4.8 H5.2 Q4 4.8 4 6 V20.4 Q4 21.6 5.2 21.6 H18.8 Q20 21.6 20 20.4 V6 Q20 4.8 18.8 4.8 H15.4" fill="none" stroke="#a2d273" stroke-width="1.8" stroke-linejoin="round"/><path d="M8.8 6.6 V4.6 Q8.8 3.9 9.5 3.9 H10.5 C10.5 1.7 13.5 1.7 13.5 3.9 H14.5 Q15.2 3.9 15.2 4.6 V6.6Z" fill="none" stroke="#a2d273" stroke-width="1.53" stroke-linejoin="round"/><path d="M12 9.6 V17.4 M8.1 13.5 H15.9" stroke="#a2d273" stroke-width="2.3"/></svg>
<div class="t" id="tr16" style="left:125.74px;top:598px;font-size:12.6px;color:#a2d273;font-weight:normal;letter-spacing:-0px;">Consultation Request for Allied Health Services</div>
<svg class="ic" style="left:391px;top:592.8px" width="13" height="13" viewBox="0 0 24 24" fill="#74b255"><path d="M18 8h-1V6c0-2.76-2.24-5-5-5S7 3.24 7 6v2H6c-1.1 0-2 .9-2 2v10c0 1.1.9 2 2 2h12c1.1 0 2-.9 2-2V10c0-1.1-.9-2-2-2zM9 6c0-1.66 1.34-3 3-3s3 1.34 3 3v2H9V6zm9 14H6V10h12v10zm-6-3c1.1 0 2-.9 2-2s-.9-2-2-2-2 .9-2 2 .9 2 2 2z"/></svg>
<svg class="ic" style="left:81.8px;top:619.7px" width="20" height="20" viewBox="0 0 24 24" ><path d="M3.25 8 Q3.25 7.05 4.2 7.05 H20.2 Q21.15 7.05 21.15 8 V18.1 Q21.15 19.05 20.2 19.05 H4.2 Q3.25 19.05 3.25 18.1Z" fill="none" stroke="#424242" stroke-width="1.9"/><path d="M2.3 8 V5.3 Q2.3 4.1 3.5 4.1 H9.2 Q10 4.1 10.4 4.8 L11.6 7 H2.3Z" fill="#424242"/></svg>
<div class="t" id="tr17" style="left:108.15px;top:625px;font-size:12.6px;color:#3d3d3d;font-weight:normal;letter-spacing:0.156px;">Administration</div>
<svg class="ic" style="left:428.7px;top:621.9px" width="20" height="20" viewBox="0 0 24 24" fill="#3a3a3a"><path d="M10 6L8.59 7.41 13.17 12l-4.58 4.59L10 18l6-6z"/></svg>
<svg class="ic" style="left:81.8px;top:646.7px" width="20" height="20" viewBox="0 0 24 24" ><path d="M3.25 8 Q3.25 7.05 4.2 7.05 H20.2 Q21.15 7.05 21.15 8 V18.1 Q21.15 19.05 20.2 19.05 H4.2 Q3.25 19.05 3.25 18.1Z" fill="none" stroke="#424242" stroke-width="1.9"/><path d="M2.3 8 V5.3 Q2.3 4.1 3.5 4.1 H9.2 Q10 4.1 10.4 4.8 L11.6 7 H2.3Z" fill="#424242"/></svg>
<div class="t" id="tr18" style="left:107.4px;top:652px;font-size:12.6px;color:#3d3d3d;font-weight:normal;letter-spacing:-0.369px;">MSSS</div>
<svg class="ic" style="left:428.7px;top:648.9px" width="20" height="20" viewBox="0 0 24 24" fill="#3a3a3a"><path d="M10 6L8.59 7.41 13.17 12l-4.58 4.59L10 18l6-6z"/></svg>
<svg class="ic" style="left:81.8px;top:673.7px" width="20" height="20" viewBox="0 0 24 24" ><path d="M3.25 8 Q3.25 7.05 4.2 7.05 H20.2 Q21.15 7.05 21.15 8 V18.1 Q21.15 19.05 20.2 19.05 H4.2 Q3.25 19.05 3.25 18.1Z" fill="none" stroke="#424242" stroke-width="1.9"/><path d="M2.3 8 V5.3 Q2.3 4.1 3.5 4.1 H9.2 Q10 4.1 10.4 4.8 L11.6 7 H2.3Z" fill="#424242"/></svg>
<div class="t" id="tr19" style="left:108.2px;top:679px;font-size:12.6px;color:#3d3d3d;font-weight:normal;letter-spacing:-0.392px;">Voyer</div>
<svg class="ic" style="left:428.7px;top:675.9px" width="20" height="20" viewBox="0 0 24 24" fill="#3a3a3a"><path d="M10 6L8.59 7.41 13.17 12l-4.58 4.59L10 18l6-6z"/></svg>
<svg class="ic" style="left:454px;top:167px" width="10" height="8" viewBox="0 0 10 8"><path d="M0.5 7 L5 1.5 L9.5 7Z" fill="#8a8a8a"/></svg>
<svg class="ic" style="left:454.6px;top:868px" width="10" height="8" viewBox="0 0 10 8"><path d="M0.5 1 L5 6.2 L9.5 1Z" fill="#808080"/></svg>
<svg class="ic" style="left:71.8px;top:886.5px" width="8" height="10" viewBox="0 0 8 10"><path d="M7 0.5 L1.5 5 L7 9.5Z" fill="#5a5a5a"/></svg>
<svg class="ic" style="left:436.8px;top:886.5px" width="8" height="10" viewBox="0 0 8 10"><path d="M1 0.5 L6.5 5 L1 9.5Z" fill="#5a5a5a"/></svg>
</aside>
<main>
<div id="mp"><div id="mph"></div>
<div class="abs" style="left:0;top:79px;width:1348px;height:1px;background:#e0e0e0"></div>
<div class="abs" style="left:0;top:77px;width:269px;height:2px;background:#4d9fd7"></div>
</div>
<div class="t" id="t_title" style="left:500.37px;top:77px;font-size:18.4px;color:#fff;font-weight:normal;letter-spacing:0.161px;">Consultation Request for Allied Health Services</div>
<div class="t" id="tab0" style="left:584.36px;top:120px;font-size:12.4px;color:#757575;font-weight:normal;letter-spacing:-0.705px;">PROPERTIES</div>
<div class="t" id="tab1" style="left:850.74px;top:120px;font-size:12.4px;color:#757575;font-weight:normal;letter-spacing:-0.497px;">PARAMETERS</div>
<div class="t" id="tab2" style="left:1113.14px;top:120px;font-size:12.4px;color:#757575;font-weight:normal;letter-spacing:-0.992px;word-spacing:1.8px;">HEADER &amp; FOOT</div>
<div class="t" id="tab3" style="left:1390.61px;top:120px;font-size:12.4px;color:#757575;font-weight:normal;letter-spacing:-0.495px;">ASSOCIATION</div>
<div class="t" id="tab4" style="left:1674.94px;top:120px;font-size:12.4px;color:#757575;font-weight:normal;letter-spacing:-0.465px;">SYSTEM</div>
<div class="t" id="h1" style="left:512.32px;top:176px;font-size:16.2px;color:#333;font-weight:normal;letter-spacing:0.126px;">Document details</div>
<div class="abs" style="left:513px;top:194px;width:1294px;height:1px;background:#dcdcdc"></div>
<div class="t" id="l_name" style="left:512.95px;top:215px;font-size:12.6px;color:#2b2b2b;font-weight:normal;letter-spacing:0.286px;">Name</div>
<div class="t" id="l_desc" style="left:512.95px;top:266px;font-size:12.6px;color:#2b2b2b;font-weight:normal;letter-spacing:0.122px;">Description</div>
<div class="t" id="l_spec" style="left:513.17px;top:317px;font-size:12.6px;color:#2b2b2b;font-weight:normal;letter-spacing:0.082px;">Specialization</div>
<div class="t" id="l_third" style="left:513.75px;top:362px;font-size:12.6px;color:#2b2b2b;font-weight:normal;letter-spacing:-0.025px;">Third party</div>
<div class="t" id="l_mand" style="left:512.95px;top:410px;font-size:12.6px;color:#2b2b2b;font-weight:normal;letter-spacing:0.106px;">Mandatory Stay / Appointment</div>
<div class="t" id="l_show" style="left:513.17px;top:455px;font-size:12.6px;color:#2b2b2b;font-weight:normal;letter-spacing:-0.028px;">Show prescriber number</div>
<div class="t" id="l_ver" style="left:513.61px;top:500px;font-size:12.6px;color:#2b2b2b;font-weight:normal;letter-spacing:-0.021px;">Version code:</div>
<div class="t" id="l_det" style="left:512.95px;top:548px;font-size:12.6px;color:#2b2b2b;font-weight:normal;letter-spacing:0.05px;">Details of changes</div>
<div class="t" id="l_rep" style="left:512.95px;top:628px;font-size:12.6px;color:#2b2b2b;font-weight:normal;letter-spacing:0.057px;">Reports</div>
<svg class="ic" style="left:581.7px;top:359.9px" width="12" height="12" viewBox="0 0 24 24" fill="#2b2b2b"><path d="M11 7h2v2h-2zm0 4h2v6h-2zm1-9C6.48 2 2 6.48 2 12s4.48 10 10 10 10-4.48 10-10S17.52 2 12 2zm0 18c-4.41 0-8-3.59-8-8s3.59-8 8-8 8 3.59 8 8-3.59 8-8 8z"/></svg>
<div class="t" id="i_name" style="left:845.37px;top:212px;font-size:12.6px;color:#2b2b2b;font-weight:normal;letter-spacing:0.008px;">Consultation Request for Allied Health Services</div>
<div class="ul" style="left:845px;top:229px;width:906px"></div>
<div class="t lbl" style="left:1751px;top:214px">*</div>
<div class="ul" style="left:845px;top:280px;width:906px"></div>
<div class="t" id="i_spec" style="left:845.14px;top:314px;font-size:12.6px;color:#2b2b2b;font-weight:normal;letter-spacing:0.017px;">Professional Request</div>
<div class="abs" style="left:845px;top:330.6px;width:906px;height:2px;background:#3e97d3"></div>
<svg class="ic" style="left:1734.1px;top:310px" width="18" height="18" viewBox="0 0 24 24" fill="#3e97d3"><path d="M7 10l5 5 5-5z"/></svg>
<div class="cb" style="left:845px;top:364.8px"></div>
<div class="cb" style="left:845px;top:409.8px"></div>
<div class="cb" style="left:845px;top:454.8px"></div>
<div class="ul" style="left:845px;top:514px;width:225px"></div>
<div class="ul" style="left:845px;top:562px;width:906px"></div>
<div class="t" id="h2" style="left:513.78px;top:580px;font-size:16.2px;color:#333;font-weight:normal;letter-spacing:0.085px;">Associating the document with a report</div>
<div class="abs" style="left:513px;top:598px;width:1294px;height:1px;background:#dcdcdc"></div>
<div class="t" id="b_mod" style="left:859.97px;top:627px;font-size:12.6px;color:#1a8bd0;font-weight:bold;letter-spacing:-0.461px;">MODIFY</div>
</main>
<section>
<div class="hl ov" style="left:94px;top:116px;width:47px;height:46.6px"></div>
<div class="hl ov" style="left:800px;top:189px;width:381px;height:51px"></div>
<div class="hl ov" style="left:805px;top:290px;width:244px;height:52px"></div>
<div class="num ov" style="left:145px;top:150px"><span class="one">1</span></div>
<div class="num ov" style="left:1221px;top:189px">2</div>
<div class="num ov" style="left:1077.8px;top:296px">3</div>
<div class="num ov" style="left:1716px;top:80px">4</div>
</section>
<section>
<div class="abs" style="left:1771px;top:72px;width:45px;height:45px;border-radius:50%;background:#4caf50;box-shadow:0 2px 4px rgba(0,0,0,.35)"></div>
<svg class="ic" style="left:1782.2px;top:84px" width="21.6" height="21.6" viewBox="0 0 24 24" fill="#fff"><path d="M17 3H5c-1.11 0-2 .9-2 2v14c0 1.1.89 2 2 2h14c1.1 0 2-.9 2-2V7l-4-4zm2 16H5V5h11.17L19 7.83V19zm-7-7c-1.66 0-3 1.34-3 3s1.34 3 3 3 3-1.34 3-3-1.34-3-3-3zM6 6h9v4H6z"/></svg>
<div class="abs" style="left:1765px;top:836px;width:51px;height:51px;border-radius:50%;background:#2779b0;box-shadow:0 3px 5px -1px rgba(0,0,0,.2),0 6px 10px 0 rgba(0,0,0,.14),0 1px 18px 0 rgba(0,0,0,.12)"></div>
<svg class="ic" style="left:1779.7px;top:850.8px" width="21.6" height="21.6" viewBox="0 0 24 24" fill="#fff"><path d="M14.06 9.02l.92.92L5.92 19H5v-.92l9.06-9.06M17.66 3c-.25 0-.51.1-.7.29l-1.83 1.83 3.75 3.75 1.83-1.83c.39-.39.39-1.02 0-1.41l-2.34-2.34c-.2-.2-.45-.29-.71-.29zm-3.6 3.19L3 17.25V21h3.75L17.81 9.94l-3.75-3.75z"/></svg>
</section>
<footer>
<div id="con"></div>
<div class="t" id="t_con" style="left:84.96px;top:923px;font-size:12.6px;color:#222;font-weight:normal;letter-spacing:-0.024px;">Console</div>
<svg class="ic" style="left:1803.1px;top:923.5px" width="16" height="16" viewBox="0 0 24 24" fill="#777"><path d="M16.59 8.59L12 13.17 7.41 8.59 6 10l6 6 6-6z"/></svg>
</footer>
<svg class="ic ov" style="left:1081px;top:424px" width="14" height="22" viewBox="0 0 14 22"><path d="M1.5 1.5 V17.5 L5.2 14 L7.8 20 L10 19 L7.4 13.2 H12.6Z" fill="#fff" stroke="#222" stroke-width="1.1" stroke-linejoin="round"/></svg>
</div></body></html>
